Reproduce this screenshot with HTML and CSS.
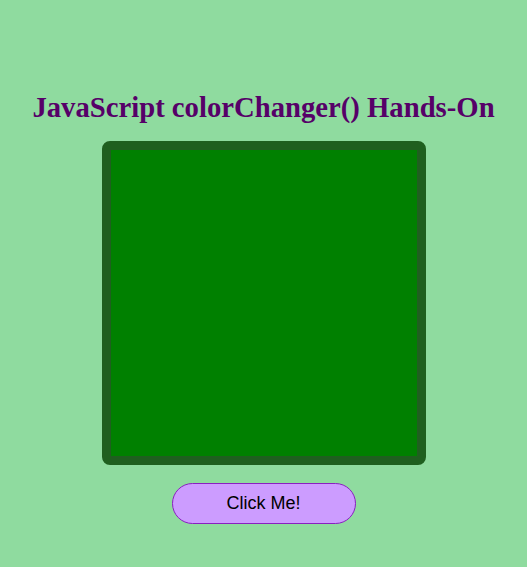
FILE: index.html
```html
<!DOCTYPE html>
<html>
<head>
<meta charset="utf-8">
<link rel="stylesheet" href="styles.css">
</head>
<body>
<div class="page">
  <h1 class="title">JavaScript colorChanger() Hands-On</h1>
  <div class="box"></div>
  <button class="btn">Click Me!</button>
</div>
</body>
</html>
```
FILE: styles.css
```css
html, body {
  margin: 0;
  padding: 0;
  background: #8fdb9f;
}
.page {
  display: flex;
  flex-direction: column;
  align-items: center;
  padding-top: 92px;
}
.title {
  margin: 0;
  font-family: "Liberation Serif", serif;
  font-weight: bold;
  font-size: 28.7px;
  line-height: 30px;
  color: #560068;
}
.box {
  margin-top: 19px;
  width: 306px;
  height: 306px;
  background: #008000;
  border: 9px solid #1f5f1f;
  border-radius: 8px;
}
.btn {
  margin-top: 18px;
  width: 184px;
  height: 41px;
  border-radius: 21px;
  border: 1px solid #8a1fc0;
  background: #cc9cff;
  font-family: "Liberation Sans", sans-serif;
  font-size: 18px;
  color: #000;
  padding: 0;
}
```
